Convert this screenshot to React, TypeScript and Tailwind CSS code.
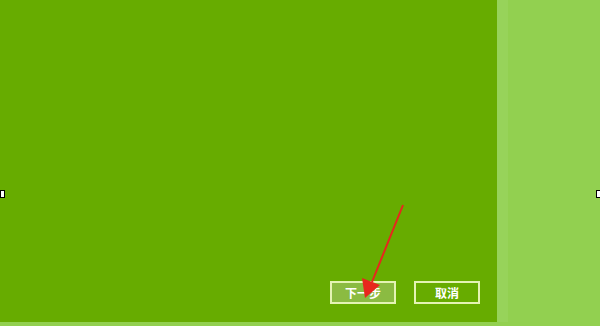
export default function App() {
  return (
    <div className="relative w-[600px] h-[326px] overflow-hidden bg-[#92d050]" style={{ fontFamily: '"Noto Sans CJK SC", "Noto Sans", sans-serif' }}>
      <div className="flex h-[322px]">
        <div className="w-[497px] h-full bg-[#67ac00] flex flex-col justify-end items-end pr-[17px] pb-[18px]">
          <div className="flex gap-[18px]">
            <button className="w-[66px] h-[23px] border-2 border-[#e4f3b4] bg-[#8bbb42] text-white text-[12px] font-bold leading-none flex items-center justify-center">下一步</button>
            <button className="w-[66px] h-[23px] border-2 border-[#e4f3b4] bg-[#67ac00] text-white text-[12px] font-bold leading-none flex items-center justify-center">取消</button>
          </div>
        </div>
        <div className="w-[11px] h-full bg-[#97d35a]" />
        <div className="flex-1 h-full bg-[#92d050]" />
      </div>
      <div className="absolute left-0 top-[190px] w-[5px] h-[8px] bg-white border border-black" />
      <div className="absolute left-[596px] top-[190px] w-[6px] h-[8px] bg-white border border-black" />
      <svg className="absolute left-0 top-0" width="600" height="326">
        <line x1="403" y1="205" x2="372" y2="282" stroke="#e8261d" strokeWidth="2" />
        <polygon points="365,298 362,278 380,285" fill="#e8261d" />
      </svg>
    </div>
  );
}
